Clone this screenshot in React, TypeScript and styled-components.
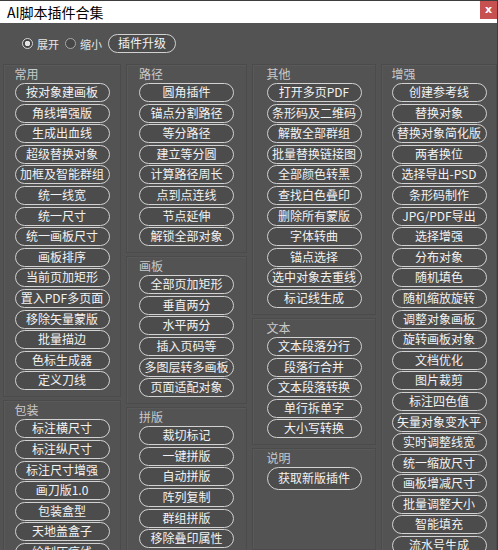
import styled, { createGlobalStyle } from 'styled-components';

interface IGroup {
  title: string;
  items: string[];
  tall?: boolean;
}

const columns: IGroup[][] = [
  [
    {
      title: '常用',
      items: [
        '按对象建画板',
        '角线增强版',
        '生成出血线',
        '超级替换对象',
        '加框及智能群组',
        '统一线宽',
        '统一尺寸',
        '统一画板尺寸',
        '画板排序',
        '当前页加矩形',
        '置入PDF多页面',
        '移除矢量蒙版',
        '批量描边',
        '色标生成器',
        '定义刀线',
      ],
    },
    {
      title: '包装',
      items: ['标注横尺寸', '标注纵尺寸', '标注尺寸增强', '画刀版1.0', '包装盒型', '天地盖盒子', '绘制压痕线'],
    },
  ],
  [
    {
      title: '路径',
      items: ['圆角插件', '锚点分割路径', '等分路径', '建立等分圆', '计算路径周长', '点到点连线', '节点延伸', '解锁全部对象'],
    },
    {
      title: '画板',
      items: ['全部页加矩形', '垂直两分', '水平两分', '插入页码等', '多图层转多画板', '页面适配对象'],
    },
    {
      title: '拼版',
      items: ['裁切标记', '一键拼版', '自动拼版', '阵列复制', '群组拼版', '移除叠印属性'],
    },
  ],
  [
    {
      title: '其他',
      items: [
        '打开多页PDF',
        '条形码及二维码',
        '解散全部群组',
        '批量替换链接图',
        '全部颜色转黑',
        '查找白色叠印',
        '删除所有蒙版',
        '字体转曲',
        '锚点选择',
        '选中对象去重线',
        '标记线生成',
      ],
    },
    {
      title: '文本',
      items: ['文本段落分行', '段落行合并', '文本段落转换', '单行拆单字', '大小写转换'],
    },
    { title: '说明', items: ['获取新版插件'], tall: true },
  ],
  [
    {
      title: '增强',
      items: [
        '创建参考线',
        '替换对象',
        '替换对象简化版',
        '两者换位',
        '选择导出-PSD',
        '条形码制作',
        'JPG/PDF导出',
        '选择增强',
        '分布对象',
        '随机填色',
        '随机缩放旋转',
        '调整对象画板',
        '旋转画板对象',
        '文档优化',
        '图片裁剪',
        '标注四色值',
        '矢量对象变水平',
        '实时调整线宽',
        '统一缩放尺寸',
        '画板增减尺寸',
        '批量调整大小',
        '智能填充',
        '流水号生成',
      ],
    },
  ],
];

export default function App() {
  return (
    <>
      <GlobalStyle />
      <Window>
        <TitleBar>
          <Title>AI脚本插件合集</Title>
          <CloseButton>x</CloseButton>
        </TitleBar>
        <Toolbar>
          <RadioLabel>
            <Radio $checked />
            展开
          </RadioLabel>
          <RadioLabel>
            <Radio />
            缩小
          </RadioLabel>
          <UpgradeButton>插件升级</UpgradeButton>
        </Toolbar>
        <Columns>
          {columns.map((groups, ci) => (
            <Column key={ci}>
              {groups.map((g) => (
                <Panel key={g.title}>
                  <Inner>
                    <GroupTitle>{g.title}</GroupTitle>
                    <List>
                      {g.items.map((item) => (
                        <ActionButton key={item} $tall={g.tall}>
                          {item}
                        </ActionButton>
                      ))}
                    </List>
                  </Inner>
                </Panel>
              ))}
            </Column>
          ))}
        </Columns>
      </Window>
    </>
  );
}

const GlobalStyle = createGlobalStyle`
  html, body {
    margin: 0;
    height: 550px;
    overflow: hidden;
    background: #535353;
  }
  body {
    font-family: "Noto Sans CJK SC", "Liberation Sans", sans-serif;
  }
`;

const Window = styled.div`
  width: 498px;
  height: 550px;
  box-sizing: border-box;
  border-top: 1px solid #3c3c3c;
  border-right: 1px solid #3c3c3c;
  display: flex;
  flex-direction: column;
  overflow: hidden;
`;

const TitleBar = styled.div`
  height: 22px;
  background: #ffffff;
  display: flex;
  align-items: flex-start;
  justify-content: space-between;
`;

const Title = styled.span`
  margin: 1px 0 0 7px;
  font-size: 14px;
  line-height: 20px;
  color: #000;
`;

const CloseButton = styled.div`
  width: 17px;
  height: 18px;
  background: #c75050;
  color: #fff;
  font-family: "DejaVu Sans", sans-serif;
  font-weight: bold;
  font-size: 11px;
  line-height: 17px;
  text-align: center;
`;

const Toolbar = styled.div`
  display: flex;
  align-items: center;
  gap: 6px;
  padding: 11px 0 0 22px;
  height: 19px;
`;

const RadioLabel = styled.label`
  display: flex;
  align-items: center;
  gap: 4px;
  font-size: 11px;
  color: #e6e6e6;
`;

const Radio = styled.span<{ $checked?: boolean }>`
  width: 11px;
  height: 11px;
  box-sizing: border-box;
  border-radius: 50%;
  border: 1px solid ${(p) => (p.$checked ? '#d6d6d6' : '#a8a8a8')};
  background: ${(p) => (p.$checked ? 'radial-gradient(circle, #e4e4e4 0 2.5px, #444 3px)' : '#474747')};
`;

const UpgradeButton = styled.div`
  width: 68px;
  height: 19px;
  box-sizing: border-box;
  border: 1.5px solid #d2d2d2;
  border-radius: 10px;
  background: #4c4c4c;
  color: #f2f2f2;
  font-size: 12px;
  line-height: 16px;
  text-align: center;
`;

const Columns = styled.div`
  flex: 1;
  display: grid;
  grid-template-columns: 118px 121px 124px 1fr;
  column-gap: 5px;
  padding: 11px 0 0 3px;
  min-height: 0;
`;

const Column = styled.div`
  display: flex;
  flex-direction: column;
  gap: 3px;
  min-height: 0;

  & > :last-child {
    flex: 1;
  }
`;

const Panel = styled.div`
  border: 1px solid #4b4b4b;
  box-shadow: inset 1px 1px 0 #595959;
  padding-bottom: 6px;
  display: flex;
  justify-content: center;
`;

const Inner = styled.div`
  width: 95px;
`;

const GroupTitle = styled.div`
  height: 18px;
  font-size: 12px;
  line-height: 18px;
  color: #c9c9c9;
`;

const List = styled.div`
  display: flex;
  flex-direction: column;
  gap: 1.6px;
`;

const ActionButton = styled.div<{ $tall?: boolean }>`
  height: ${(p) => (p.$tall ? '23px' : '19px')};
  box-sizing: border-box;
  border: 1.5px solid #d2d2d2;
  border-radius: 12px;
  background: #4c4c4c;
  color: #f2f2f2;
  font-size: 12px;
  line-height: ${(p) => (p.$tall ? '20px' : '16px')};
  text-align: center;
  white-space: nowrap;
  overflow: hidden;
`;
